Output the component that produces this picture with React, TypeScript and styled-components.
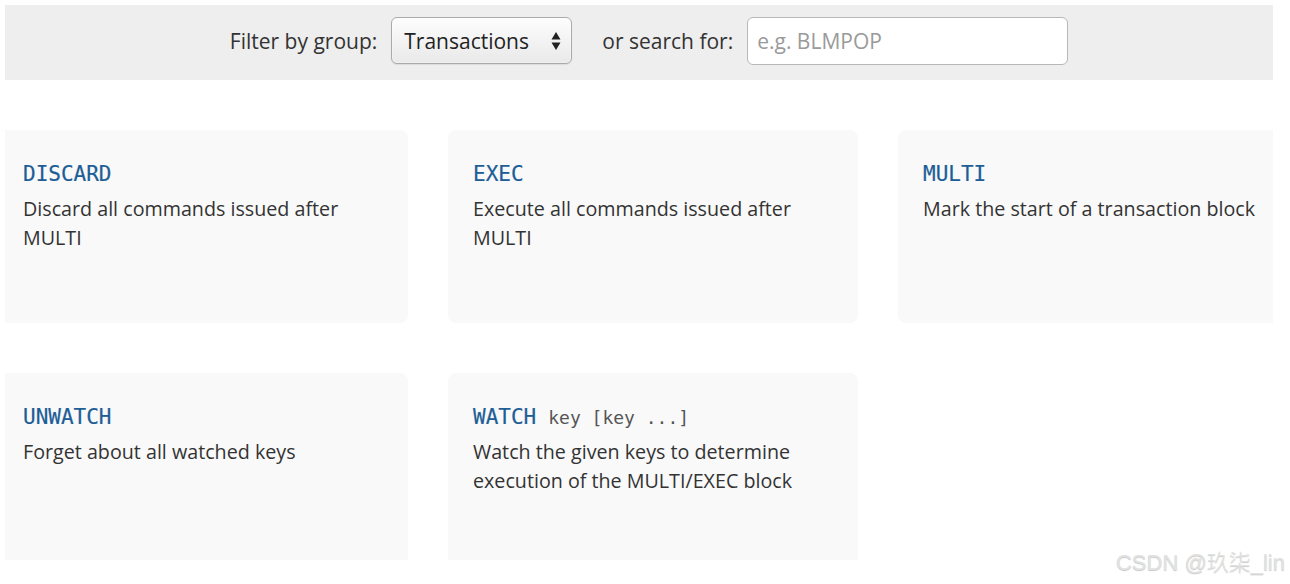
import React from "react";
import styled, { createGlobalStyle } from "styled-components";

const Global = createGlobalStyle`
  html, body { margin: 0; padding: 0; background: #fff; }
  body { font-family: "Open Sans", "Noto Sans", sans-serif; color: #333; }
`;

const Page = styled.div`
  position: relative;
  width: 1290px;
  height: 584px;
  padding: 5px 17px 0 5px;
  box-sizing: border-box;
`;

const Frame = styled.div`
  width: 1268px;
  height: 555px;
  overflow: hidden;
  display: flex;
  flex-direction: column;
`;

const FilterBar = styled.div`
  height: 75px;
  background: #eeeeee;
  display: flex;
  align-items: center;
  justify-content: center;
  padding: 0 0 4px 20px;
  box-sizing: border-box;
  flex-shrink: 0;
`;

const Label = styled.label<{ $gapAfter: number }>`
  font-size: 21px;
  color: #333;
  margin-right: ${(p) => p.$gapAfter}px;
`;

const SelectBox = styled.div`
  width: 181px;
  height: 47px;
  box-sizing: border-box;
  border: 1px solid #aaa;
  border-radius: 6px;
  background: linear-gradient(#fdfdfd, #e9e9e9);
  box-shadow: inset 0 0 2px #fff, 0 1px 1px rgba(0,0,0,0.08);
  display: flex;
  align-items: center;
  justify-content: space-between;
  padding: 0 10px 0 12px;
  margin-right: 30px;
  font-size: 21px;
  color: #222;
`;

const Arrows = styled.svg`
  width: 10px;
  height: 22px;
`;

const SearchInput = styled.div`
  width: 321px;
  height: 48px;
  box-sizing: border-box;
  border: 1px solid #b8b8b8;
  border-radius: 6px;
  background: #fff;
  display: flex;
  align-items: center;
  padding-left: 9px;
  font-size: 21px;
  color: #9a9a9a;
`;

const Grid = styled.div`
  margin-top: 50px;
  margin-left: -7px;
  display: grid;
  grid-template-columns: repeat(3, 410px);
  grid-auto-rows: 193px;
  column-gap: 40px;
  row-gap: 50px;
`;

const Card = styled.div`
  background: #f9f9f9;
  border-radius: 8px;
  padding: 29px 20px 0 25px;
  box-sizing: border-box;
`;

const Title = styled.div`
  height: 30px;
  display: flex;
  align-items: baseline;
  margin-bottom: 5px;
  white-space: nowrap;
`;

const Name = styled.span`
  font-family: "DejaVu Sans Mono", monospace;
  font-size: 21px;
  color: #1d5e97;
  line-height: 30px;
  -webkit-text-stroke: 0.2px #1d5e97;
`;

const Args = styled.span`
  font-family: "DejaVu Sans Mono", monospace;
  font-size: 18px;
  color: #555;
  margin-left: 12px;
`;

const Desc = styled.div`
  font-size: 19.7px;
  line-height: 29px;
  color: #333;
`;

const Watermark = styled.div`
  position: absolute;
  right: 5px;
  bottom: 8px;
  font-family: "Liberation Sans", Arial, "Noto Sans CJK SC", sans-serif;
  font-size: 22px;
  font-weight: 400;
  color: #e2e2e2;
  text-shadow: 0 1px 1px rgba(0,0,0,0.22);
`;

const WatermarkCjk = styled.span`
  font-family: "Noto Sans CJK SC", sans-serif;
  font-weight: 300;
`;

const commands = [
  { name: "DISCARD", desc: "Discard all commands issued after MULTI" },
  { name: "EXEC", desc: "Execute all commands issued after MULTI" },
  { name: "MULTI", desc: "Mark the start of a transaction block" },
  { name: "UNWATCH", desc: "Forget about all watched keys" },
  { name: "WATCH", args: "key [key ...]", desc: "Watch the given keys to determine execution of the MULTI/EXEC block" },
];

export default function App() {
  return (
    <>
      <Global />
      <Page>
        <Frame>
          <FilterBar>
            <Label $gapAfter={14}>Filter by group:</Label>
            <SelectBox>
              <span>Transactions</span>
              <Arrows viewBox="0 0 10 22">
                <path d="M5 2 L9.5 9.5 H0.5 Z" fill="#222" />
                <path d="M5 20 L9.5 12.5 H0.5 Z" fill="#222" />
              </Arrows>
            </SelectBox>
            <Label $gapAfter={14}>or search for:</Label>
            <SearchInput>e.g. BLMPOP</SearchInput>
          </FilterBar>
          <Grid>
            {commands.map((c) => (
              <Card key={c.name}>
                <Title>
                  <Name>{c.name}</Name>
                  {c.args && <Args>{c.args}</Args>}
                </Title>
                <Desc>{c.desc}</Desc>
              </Card>
            ))}
          </Grid>
        </Frame>
        <Watermark>
          CSDN @<WatermarkCjk>玖柒</WatermarkCjk>_lin
        </Watermark>
      </Page>
    </>
  );
}
